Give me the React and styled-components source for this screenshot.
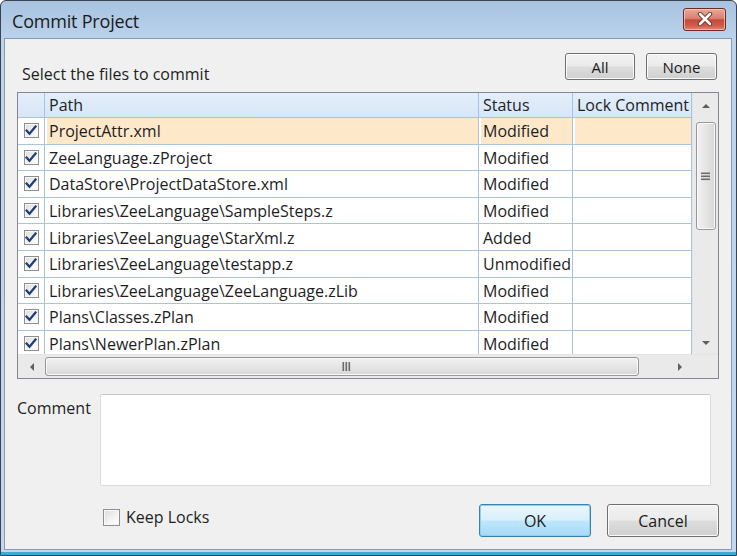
import React from 'react';
import styled, { createGlobalStyle } from 'styled-components';

const GlobalStyle = createGlobalStyle`
  html, body {
    margin: 0;
    padding: 0;
    background: #ffffff;
  }
  * { box-sizing: border-box; }
`;

const FONT = `"Open Sans", "Noto Sans", "Liberation Sans", sans-serif`;

const Window = styled.div`
  width: 737px;
  height: 556px;
  display: flex;
  flex-direction: column;
  background: linear-gradient(180deg, #a7c3e1 0%, #bcd3ec 40px, #c3d8ee 100%);
  border: 1px solid #3b4350;
  border-radius: 6px 6px 0 0;
  padding: 0 4px 5px 3px;
  font-family: ${FONT};
  color: #1e1e1e;
  overflow: hidden;
  box-shadow: inset 0 -3px 0 #44a6d6;
`;

const TitleBar = styled.div`
  height: 37px;
  display: flex;
  align-items: center;
  justify-content: space-between;
  padding: 0 6px 0 8px;
  flex-shrink: 0;
`;

const Title = styled.div`
  font-size: 18px;
  color: #1a1a1a;
  letter-spacing: -0.2px;
  margin-top: 2px;
`;

const CloseButton = styled.div`
  width: 43px;
  height: 23px;
  margin-top: -1px;
  border: 1px solid #6f2a22;
  border-radius: 3px;
  background: linear-gradient(180deg, #e9a898 0%, #d98070 45%, #c44a36 52%, #cf5e48 80%, #e08a74 100%);
  box-shadow: inset 0 0 0 1px rgba(255, 220, 210, 0.6);
  display: flex;
  align-items: center;
  justify-content: center;
`;

const Panel = styled.div`
  flex: 1;
  background: #f0f0f0;
  border: 1px solid #8a9bb0;
  display: flex;
  flex-direction: column;
  padding: 14px 12px 0 12px;
`;

const TopRow = styled.div`
  display: flex;
  align-items: flex-end;
  justify-content: space-between;
  height: 27px;
`;

const Label = styled.div`
  font-size: 16px;
  padding-left: ${(p) => p.$indent || 0}px;
  padding-top: ${(p) => p.$drop || 0}px;
  margin-bottom: ${(p) => p.$sink || 0}px;
`;

const ButtonGroup = styled.div`
  display: flex;
  gap: 11px;
  padding-right: 2px;
`;

const Button = styled.div`
  width: ${(p) => p.$w}px;
  height: ${(p) => p.$h}px;
  display: flex;
  align-items: center;
  justify-content: center;
  font-size: ${(p) => p.$fs || 15}px;
  border-radius: 3px;
  border: 1px solid ${(p) => (p.$default ? '#3c7fb1' : '#707070')};
  background: ${(p) =>
    p.$default
      ? 'linear-gradient(180deg, #eaf6fd 0%, #d9f0fc 48%, #bee6fd 52%, #a7d9f5 100%)'
      : 'linear-gradient(180deg, #f2f2f2 0%, #ebebeb 48%, #dddddd 52%, #cfcfcf 100%)'};
  box-shadow: inset 0 0 0 1px ${(p) => (p.$default ? '#8ed0f0' : '#fbfbfb')};
  color: #1a1a1a;
`;

const Grid = styled.div`
  margin-top: 12px;
  height: 287px;
  border: 1px solid #828790;
  background: #ffffff;
  display: flex;
  flex-direction: column;
`;

const GridMain = styled.div`
  flex: 1;
  display: flex;
  min-height: 0;
`;

const Table = styled.div`
  flex: 1;
  display: grid;
  grid-template-columns: 27px 434px 94px 1fr;
  grid-auto-rows: 26.6px;
  grid-template-rows: 25px;
  overflow: hidden;
  align-content: start;
`;

const HeadCell = styled.div`
  background: linear-gradient(180deg, #e3eefa 0%, #d7e6f6 100%);
  border-right: 1px solid #a9c3df;
  border-bottom: 1px solid #a9c3df;
  font-size: 16px;
  display: flex;
  align-items: center;
  padding-left: 4px;
  white-space: nowrap;
  overflow: hidden;
`;

const Cell = styled.div`
  background: ${(p) => (p.$selected ? '#fde8c9' : '#ffffff')};
  border-right: 1px solid #a9c3df;
  border-bottom: 1px solid #a9c3df;
  font-size: 16px;
  display: flex;
  align-items: center;
  padding-left: 4px;
  padding-top: 1px;
  white-space: nowrap;
  overflow: hidden;
  box-shadow: ${(p) => (p.$selected ? 'inset 2px 0 0 #ffffff' : 'none')};
`;

const CheckCell = styled.div`
  background: #ffffff;
  border-right: 1px solid #a9c3df;
  border-bottom: 1px solid #a9c3df;
  display: flex;
  align-items: center;
  justify-content: center;
`;

const Box = styled.div`
  width: ${(p) => p.$size || 15}px;
  height: ${(p) => p.$size || 15}px;
  border: 1px solid #8e8f8f;
  background: linear-gradient(135deg, #dcdcdc 0%, #f4f4f4 60%, #ffffff 100%);
  box-shadow: inset 0 0 0 1px #f8f8f8;
  display: flex;
  align-items: center;
  justify-content: center;
  flex-shrink: 0;
`;

const VScroll = styled.div`
  width: 26px;
  border-left: 1px solid #e4e4e4;
  background: #eaeaea;
  display: flex;
  flex-direction: column;
  align-items: center;
  padding: 0 2px;
`;

const ArrowBox = styled.div`
  width: ${(p) => p.$w || 22}px;
  height: ${(p) => p.$h || 24}px;
  flex-shrink: 0;
  display: flex;
  align-items: center;
  justify-content: center;
`;

const VThumb = styled.div`
  width: 20px;
  height: 108px;
  margin-top: 4px;
  border: 1px solid #979797;
  border-radius: 3px;
  background: linear-gradient(90deg, #f1f1f1 0%, #e6e6e6 50%, #d6d6d6 100%);
  box-shadow: inset 0 0 0 1px #fafafa;
  display: flex;
  align-items: center;
  justify-content: center;
`;

const Track = styled.div`
  flex: 1;
`;

const HScroll = styled.div`
  height: 24px;
  display: flex;
  align-items: center;
  background: #eaeaea;
  border-top: 1px solid #e4e4e4;
  padding-right: 26px;
`;

const HThumb = styled.div`
  width: 594px;
  height: 19px;
  border: 1px solid #979797;
  border-radius: 3px;
  background: linear-gradient(180deg, #f1f1f1 0%, #e6e6e6 50%, #d6d6d6 100%);
  box-shadow: inset 0 0 0 1px #fafafa;
  display: flex;
  align-items: center;
  justify-content: center;
  padding-left: 8px;
`;

const CommentRow = styled.div`
  display: grid;
  grid-template-columns: 83px 611px;
  margin-top: 15px;
`;

const CommentBox = styled.div`
  height: 92px;
  background: #ffffff;
  border: 1px solid #dcdcdc;
  border-top-color: #c6c6c6;
  border-radius: 2px;
`;

const BottomRow = styled.div`
  display: flex;
  align-items: center;
  margin-top: 18px;
  padding-left: 86px;
`;

const KeepLocks = styled.div`
  display: flex;
  align-items: center;
  gap: 6px;
  font-size: 16px;
  margin-top: -7px;
`;

const Spacer = styled.div`
  flex: 1;
`;

const DialogButtons = styled.div`
  display: flex;
  gap: 16px;
`;

const Check = () => (
  <svg width="12" height="11" viewBox="0 0 12 11">
    <path d="M1.5 5.5 L4.5 8.8 L10.5 1.5" fill="none" stroke="#1f3e78" strokeWidth="2.2" strokeLinecap="square" />
  </svg>
);

const CloseX = () => (
  <svg width="16" height="14" viewBox="0 0 16 14">
    <path d="M3 2 L13 12 M13 2 L3 12" stroke="#6b2a22" strokeWidth="4.4" strokeLinecap="round" />
    <path d="M3 2 L13 12 M13 2 L3 12" stroke="#ffffff" strokeWidth="2.6" strokeLinecap="round" />
  </svg>
);

const Arrow = ({ dir }) => {
  const shapes = {
    up: 'M0 5 L4 1 L8 5 Z',
    down: 'M0 1 L4 5 L8 1 Z',
    left: 'M5 0 L1 4 L5 8 Z',
    right: 'M1 0 L5 4 L1 8 Z',
  };
  const vertical = dir === 'up' || dir === 'down';
  return (
    <svg width={vertical ? 8 : 6} height={vertical ? 6 : 8} viewBox={vertical ? '0 0 8 6' : '0 0 6 8'}>
      <path d={shapes[dir]} fill="#5f5f5f" />
    </svg>
  );
};

const Grip = ({ vertical }) => (
  <svg width="9" height="9" viewBox="0 0 9 9">
    {[0, 3, 6].map((o) =>
      vertical ? (
        <rect key={o} x="0" y={o + 0.5} width="9" height="1.6" fill="#6c6c6c" />
      ) : (
        <rect key={o} x={o + 0.5} y="0" width="1.6" height="9" fill="#6c6c6c" />
      )
    )}
  </svg>
);

const files = [
  ['ProjectAttr.xml', 'Modified'],
  ['ZeeLanguage.zProject', 'Modified'],
  ['DataStore\\ProjectDataStore.xml', 'Modified'],
  ['Libraries\\ZeeLanguage\\SampleSteps.z', 'Modified'],
  ['Libraries\\ZeeLanguage\\StarXml.z', 'Added'],
  ['Libraries\\ZeeLanguage\\testapp.z', 'Unmodified'],
  ['Libraries\\ZeeLanguage\\ZeeLanguage.zLib', 'Modified'],
  ['Plans\\Classes.zPlan', 'Modified'],
  ['Plans\\NewerPlan.zPlan', 'Modified'],
];

export default function App() {
  return (
    <>
      <GlobalStyle />
      <Window>
        <TitleBar>
          <Title>Commit Project</Title>
          <CloseButton>
            <CloseX />
          </CloseButton>
        </TitleBar>
        <Panel>
          <TopRow>
            <Label $indent={5} $sink={-5}>Select the files to commit</Label>
            <ButtonGroup>
              <Button $w={70} $h={27}>All</Button>
              <Button $w={71} $h={27}>None</Button>
            </ButtonGroup>
          </TopRow>
          <Grid>
            <GridMain>
              <Table>
                <HeadCell />
                <HeadCell>Path</HeadCell>
                <HeadCell>Status</HeadCell>
                <HeadCell>Lock Comment</HeadCell>
                {files.map(([path, status], i) => (
                  <React.Fragment key={path}>
                    <CheckCell>
                      <Box>
                        <Check />
                      </Box>
                    </CheckCell>
                    <Cell $selected={i === 0}>{path}</Cell>
                    <Cell $selected={i === 0}>{status}</Cell>
                    <Cell $selected={i === 0} />
                  </React.Fragment>
                ))}
              </Table>
              <VScroll>
                <ArrowBox $h={25}>
                  <Arrow dir="up" />
                </ArrowBox>
                <VThumb>
                  <Grip vertical />
                </VThumb>
                <Track />
                <ArrowBox $h={22}>
                  <Arrow dir="down" />
                </ArrowBox>
              </VScroll>
            </GridMain>
            <HScroll>
              <ArrowBox $w={27} $h={22}>
                <Arrow dir="left" />
              </ArrowBox>
              <HThumb>
                <Grip />
              </HThumb>
              <Track />
              <ArrowBox $w={24} $h={22}>
                <Arrow dir="right" />
              </ArrowBox>
            </HScroll>
          </Grid>
          <CommentRow>
            <Label $drop={3}>Comment</Label>
            <CommentBox />
          </CommentRow>
          <BottomRow>
            <KeepLocks>
              <Box $size={17} />
              Keep Locks
            </KeepLocks>
            <Spacer />
            <DialogButtons>
              <Button $w={112} $h={33} $default $fs={16}>OK</Button>
              <Button $w={112} $h={33} $fs={16}>Cancel</Button>
            </DialogButtons>
          </BottomRow>
        </Panel>
      </Window>
    </>
  );
}
